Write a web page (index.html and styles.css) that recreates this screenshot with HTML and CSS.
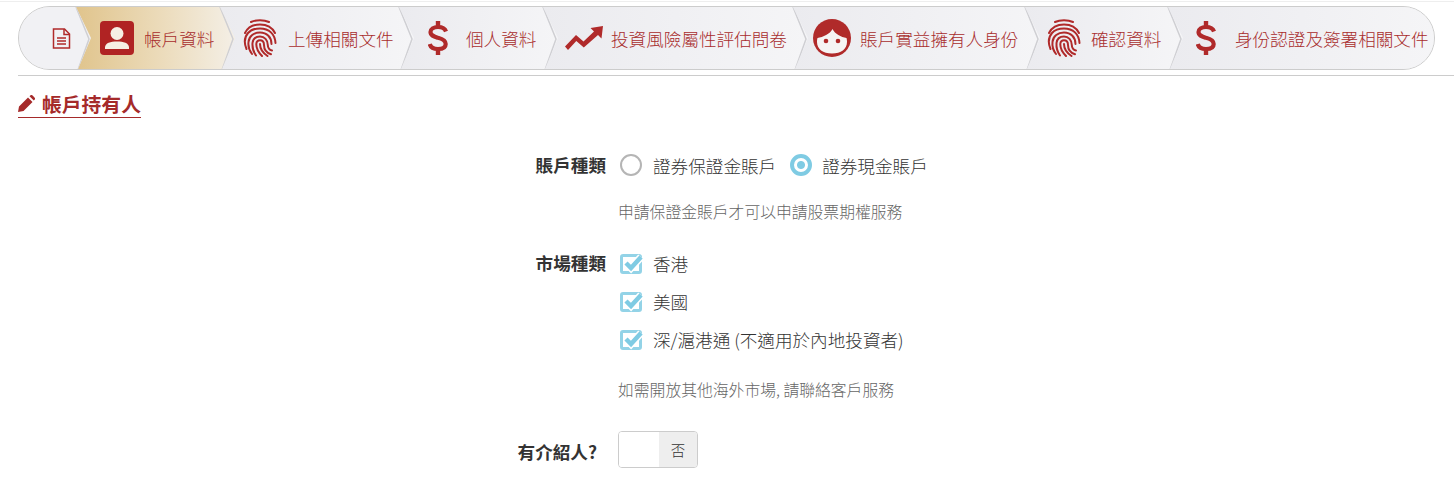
FILE: index.html
```html
<!doctype html>
<html lang="zh-Hant">
<head>
  <title>帳戶持有人</title>
  <meta charset="utf-8">
  <link rel="stylesheet" href="styles.css">
</head>
<body>

<svg class="defs" width="0" height="0">
  <symbol id="fingerprint" viewBox="0 0 34 38">
    <g fill="none" stroke="#b02a2a" stroke-width="2" stroke-linecap="round">
      <path d="M8 3C13 .5 21 .5 26 3"/>
      <path d="M2 14C5 8 10 5.500 17 5.500S29 8 32 14"/>
      <path d="M3.500 30C1 24 1.500 18 5 14C8 10.500 12 9.500 17 9.500C26 9.500 32 15 32.500 24"/>
      <path d="M9 35C6 31 5 27 5.500 23C6 17 11 13.500 17 13.500C24 13.500 28.500 18.500 28.500 25"/>
      <path d="M13 36.500C10.500 33 9.200 28 9.500 24C10 20 13 17.500 17 17.500C21.500 17.500 24.700 21 24.800 26C24.900 29 26.500 31 29 31.500"/>
      <path d="M19 37C15.500 33.500 13.200 29 13.300 25C13.500 22.500 15 21.300 17 21.300C19.500 21.300 21 23 21 26C21 30.500 24 34 28 35.300"/>
      <path d="M24.500 37C20 34 17 30 17 25"/>
    </g>
  </symbol>
  <symbol id="dollar" viewBox="0 0 20 34">
    <g fill="none" stroke="#b02a2a">
      <path d="M18 10.500C17 7.500 14 6 10 6C5.500 6 2.500 8 2.500 11C2.500 14.500 6 15.500 10 16.800C14.500 18 17.700 19.500 17.700 23C17.700 26.300 14.500 28 10 28C5.500 28 2.500 26.200 1.800 23" stroke-width="4.200"/>
      <path d="M10 0V6M10 28V34" stroke-width="4.400"/>
    </g>
  </symbol>
  <symbol id="tick" viewBox="0 0 24 22">
    <path d="M6 10l5 5L21 4" fill="none" stroke="#fff" stroke-width="7.500"/>
    <path d="M6 10l5 5L21 4" fill="none" stroke="#7fcbe3" stroke-width="4.500"/>
  </symbol>
</svg>

<div class="topline"></div>

<nav class="steps">
  <div class="step step-start">
    <svg class="doc-icon" width="19" height="21" viewBox="0 0 19 21" fill="none" stroke="#b02a2a" stroke-width="1.500">
      <path d="M1.500 1h11l5 5v14h-16z"/>
      <path d="M12 1v5.500h5.500M5 10h9M5 13h9M5 16h9"/>
    </svg>
    <svg class="chev" width="16" height="63" viewBox="0 0 16 63"><polyline points="1,0 14,32 3,63"/></svg>
  </div>
  <div class="step step-active">
    <span class="avatar-box">
      <svg width="34" height="34" viewBox="0 0 34 34" fill="#f6efe4">
        <circle cx="17" cy="12.500" r="6.500"/>
        <path d="M5 28v-1.500C5 22 10.500 20.500 17 20.500S29 22 29 26.500V28z"/>
      </svg>
    </span>
    <span class="step-label">帳戶資料</span>
    <svg class="chev" width="16" height="63" viewBox="0 0 16 63"><polyline points="1,0 14,32 3,63"/></svg>
  </div>
  <div class="step step-upload">
    <svg width="34" height="38"><use href="#fingerprint"/></svg>
    <span class="step-label">上傳相關文件</span>
    <svg class="chev" width="16" height="63" viewBox="0 0 16 63"><polyline points="1,0 14,32 3,63"/></svg>
  </div>
  <div class="step step-personal">
    <svg width="20" height="34"><use href="#dollar"/></svg>
    <span class="step-label">個人資料</span>
    <svg class="chev" width="16" height="63" viewBox="0 0 16 63"><polyline points="1,0 14,32 3,63"/></svg>
  </div>
  <div class="step step-risk">
    <svg width="38" height="24" viewBox="0 0 38 24" fill="#b02a2a">
      <path d="M0 20.500 11 9l7.500 6.500L29 5.500 25.500 2 38 0l-1.500 12.500-3.500-3.500L18.800 21.500 11.300 15 3 24z"/>
    </svg>
    <span class="step-label">投資風險屬性評估問卷</span>
    <svg class="chev" width="16" height="63" viewBox="0 0 16 63"><polyline points="1,0 14,32 3,63"/></svg>
  </div>
  <div class="step step-owner">
    <svg width="38" height="38" viewBox="0 0 38 38">
      <circle cx="19" cy="19" r="19" fill="#b02a2a"/>
      <path d="M4 23C4 30 10 34.500 19 34.500S34 30 34 23C34 21 33.800 20 33.500 19C28 18 22 15 19.500 10C17 15 10 18 4.500 19C4.200 20 4 21 4 23z" fill="#f6f4f4"/>
      <circle cx="13" cy="22" r="2.300" fill="#b02a2a"/>
      <circle cx="25" cy="22" r="2.300" fill="#b02a2a"/>
    </svg>
    <span class="step-label">賬戶實益擁有人身份</span>
    <svg class="chev" width="16" height="63" viewBox="0 0 16 63"><polyline points="1,0 14,32 3,63"/></svg>
  </div>
  <div class="step step-confirm">
    <svg width="34" height="38"><use href="#fingerprint"/></svg>
    <span class="step-label">確認資料</span>
    <svg class="chev" width="16" height="63" viewBox="0 0 16 63"><polyline points="1,0 14,32 3,63"/></svg>
  </div>
  <div class="step step-last">
    <svg width="20" height="34"><use href="#dollar"/></svg>
    <span class="step-label">身份認證及簽署相關文件</span>
  </div>
</nav>

<hr class="steps-rule">

<h2 class="section-title">
  <svg width="17" height="17" viewBox="0 0 17 17" fill="#a52a2a">
    <path d="M0 17l1-5.500L10 2.500 14.500 7 5.500 16zM11.500 1.200 12.200.5c.7-.7 1.700-.7 2.400 0l1.900 1.900c.7.7.7 1.700 0 2.400l-.7.7z"/>
  </svg>
  帳戶持有人
</h2>

<form class="account-form">
  <div class="form-label label-type">賬戶種類</div>
  <div class="form-field field-type">
    <label class="choice"><span class="radio"></span>證券保證金賬戶</label>
    <label class="choice"><span class="radio radio-on"></span>證券現金賬戶</label>
  </div>
  <p class="hint hint-type">申請保證金賬戶才可以申請股票期權服務</p>

  <div class="form-label label-market">市場種類</div>
  <div class="form-field field-market">
    <label class="choice"><span class="check"><svg width="24" height="22"><use href="#tick"/></svg></span>香港</label>
    <label class="choice"><span class="check"><svg width="24" height="22"><use href="#tick"/></svg></span>美國</label>
    <label class="choice"><span class="check"><svg width="24" height="22"><use href="#tick"/></svg></span>深/滬港通 (不適用於內地投資者)</label>
  </div>
  <p class="hint hint-market">如需開放其他海外市場, 請聯絡客戶服務</p>

  <div class="form-label label-referrer">有介紹人?</div>
  <div class="form-field field-referrer">
    <div class="toggle"><span class="toggle-blank"></span><span class="toggle-no">否</span></div>
  </div>
</form>

</body>
</html>
```

FILE: styles.css
```css
:root {
  --red: #a82c2c;
  --title-red: #a52a2a;
  --blue: #7fcbe3;
}
html {
  box-sizing: border-box;
}
*, *:before, *:after {
  box-sizing: inherit;
}
body {
  margin: 0;
  padding: 1px 18px 0;
  height: 492px;
  overflow: hidden;
  background: #fff;
  color: #333;
  font-family: "Noto Sans CJK TC", "Open Sans", sans-serif;
  font-size: 17.6px;
}
.defs {
  display: block;
  height: 0;
}
.topline {
  height: 1px;
  margin: 0 -18px 4px;
  background: #eee;
}

/* stepper */
.steps {
  display: flex;
  height: 64px;
  margin-right: 1px;
  border: 1px solid #ccc;
  border-radius: 32px;
  overflow: hidden;
  background: #eee;
}
.step {
  position: relative;
  flex: none;
  display: flex;
  align-items: center;
  margin-right: -15px;
  background: linear-gradient(90deg, #ebebef, #f5f5f7);
  clip-path: polygon(0 0, calc(100% - 15px) 0, 100% 50%, calc(100% - 13px) 100%, 0 100%);
}
.step-label {
  color: var(--red);
  font-weight: 300;
  white-space: nowrap;
}
.chev {
  position: absolute;
  top: 0;
  right: 0;
  fill: none;
  stroke: #cfcfd3;
  stroke-width: 1.500;
}
.step-start {
  z-index: 8;
  width: 72px;
  padding-left: 33px;
  background: #f1f1f4;
}
.step-active {
  z-index: 7;
  width: 159px;
  padding-left: 24px;
  background: linear-gradient(90deg, #e0c48c, #ecdcbc 55%, #f4efe6);
}
.step-upload {
  z-index: 6;
  width: 194px;
  padding-left: 23px;
}
.step-personal {
  z-index: 5;
  width: 159px;
  padding-left: 29px;
}
.step-risk {
  z-index: 4;
  width: 265px;
  padding-left: 22px;
}
.step-owner {
  z-index: 3;
  width: 247px;
  padding-left: 20px;
}
.step-confirm {
  z-index: 2;
  width: 158px;
  padding-left: 22px;
}
.step-last {
  z-index: 1;
  width: 267px;
  margin-right: 0;
  padding-left: 28px;
  clip-path: none;
}
.step-active .step-label,
.step-confirm .step-label {
  margin-left: 10px;
}
.step-upload .step-label {
  margin-left: 11px;
}
.step-personal .step-label {
  margin-left: 18px;
}
.step-risk .step-label {
  margin-left: 8px;
}
.step-owner .step-label {
  margin-left: 9px;
}
.step-last .step-label {
  margin-left: 19px;
}
.avatar-box {
  display: block;
  width: 34px;
  height: 34px;
  border-radius: 4px;
  background: #b02323;
}
.avatar-box svg {
  display: block;
}
.steps-rule {
  height: 1px;
  margin: 5px -18px 0 0;
  border: 0;
  background: #ccc;
}

/* heading */
.section-title {
  display: inline-flex;
  align-items: center;
  gap: 7px;
  height: 28px;
  margin: 14px 0 0;
  border-bottom: 1.500px solid var(--title-red);
  color: var(--title-red);
  font-size: 19.8px;
  font-weight: 700;
  line-height: 28px;
}

/* form */
.account-form {
  display: grid;
  grid-template-columns: 588px 1fr;
  column-gap: 12px;
  margin-top: 35px;
}
.form-label {
  color: #333;
  font-weight: 700;
  line-height: 26px;
  text-align: right;
}
.label-type {
  margin-top: -1px;
}
.form-field {
  line-height: 26px;
}
.field-type {
  display: flex;
  gap: 14px;
  padding-left: 2px;
}
.field-market {
  display: flex;
  flex-direction: column;
  gap: 12px;
  padding-top: 1px;
  padding-left: 2px;
}
.choice {
  display: flex;
  align-items: center;
  height: 26px;
  color: #333;
  font-weight: 300;
  white-space: nowrap;
}
.radio {
  flex: none;
  width: 22px;
  height: 22px;
  margin-top: -2px;
  margin-right: 11px;
  border: 2px solid #b5b5b5;
  border-radius: 50%;
  background: #fff;
}
.radio-on {
  margin-right: 10px;
  border: 4px solid var(--blue);
  background: radial-gradient(circle, var(--blue) 0 3.500px, #fff 4.500px);
}
.check {
  position: relative;
  flex: none;
  width: 22px;
  height: 20px;
  margin-right: 11px;
  border: 3px solid #93d3e7;
  border-radius: 3px;
}
.check svg {
  position: absolute;
  top: -4px;
  left: -3px;
}
.hint {
  grid-column: 2;
  margin: 0;
  color: #666;
  font-size: 15.8px;
  font-weight: 300;
  line-height: 22px;
}
.hint-type {
  margin-top: 22px;
  margin-bottom: 27px;
}
.hint-market {
  margin-top: 26px;
  margin-bottom: 30px;
}
.label-referrer {
  padding-right: 9px;
  padding-top: 8px;
}
.toggle {
  display: flex;
  width: 80px;
  height: 37px;
  overflow: hidden;
  border: 1px solid #ccc;
  border-radius: 4px;
}
.toggle-blank {
  flex: 1;
  background: #fff;
}
.toggle-no {
  width: 38px;
  background: #eee;
  color: #333;
  font-size: 14.500px;
  font-weight: 300;
  line-height: 35px;
  text-align: center;
}
```
